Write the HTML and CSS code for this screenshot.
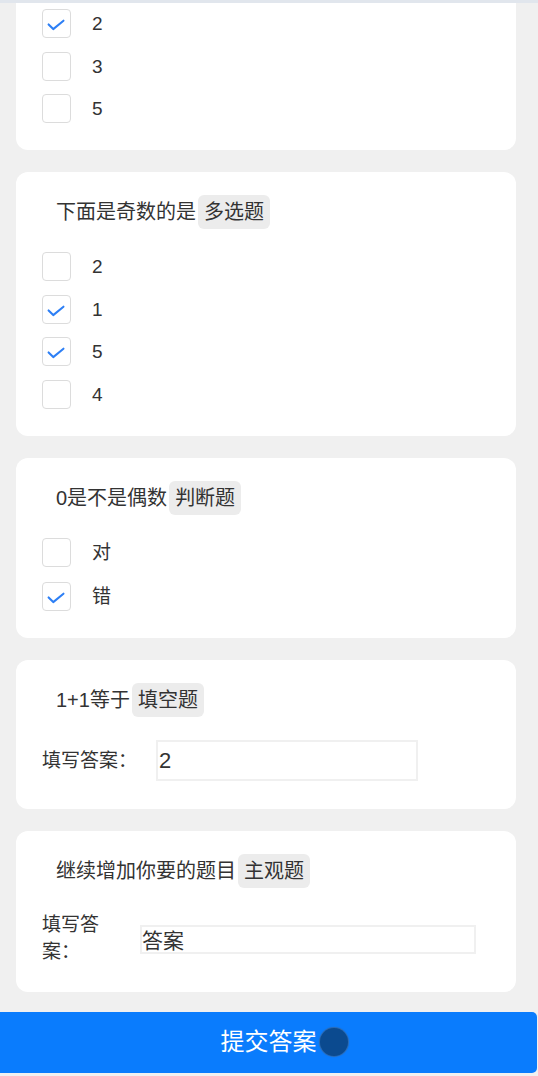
FILE: index.html
```html
<!DOCTYPE html>
<html lang="zh">
<head>
<meta charset="utf-8">
<title>答题</title>
<link rel="stylesheet" href="styles.css">
</head>
<body>
<div class="topbar"></div>
<main class="list">
  <section class="card card-first">
    <div class="options">
      <label class="option"><span class="box checked"><svg viewBox="0 0 29 29"><path d="M6 15.5 L11 20.5 L22 11.5"/></svg></span><span class="opt-text">2</span></label>
      <label class="option"><span class="box"></span><span class="opt-text">3</span></label>
      <label class="option"><span class="box"></span><span class="opt-text">5</span></label>
    </div>
  </section>

  <section class="card">
    <div class="title"><span class="q">下面是奇数的是</span><span class="tag">多选题</span></div>
    <div class="options">
      <label class="option"><span class="box"></span><span class="opt-text">2</span></label>
      <label class="option"><span class="box checked"><svg viewBox="0 0 29 29"><path d="M6 15.5 L11 20.5 L22 11.5"/></svg></span><span class="opt-text">1</span></label>
      <label class="option"><span class="box checked"><svg viewBox="0 0 29 29"><path d="M6 15.5 L11 20.5 L22 11.5"/></svg></span><span class="opt-text">5</span></label>
      <label class="option"><span class="box"></span><span class="opt-text">4</span></label>
    </div>
  </section>

  <section class="card">
    <div class="title"><span class="q">0是不是偶数</span><span class="tag">判断题</span></div>
    <div class="options options-wide">
      <label class="option"><span class="box"></span><span class="opt-text">对</span></label>
      <label class="option"><span class="box checked"><svg viewBox="0 0 29 29"><path d="M6 15.5 L11 20.5 L22 11.5"/></svg></span><span class="opt-text">错</span></label>
    </div>
  </section>

  <section class="card card-fill">
    <div class="title"><span class="q">1+1等于</span><span class="tag">填空题</span></div>
    <div class="field">
      <span class="field-label wide">填写答案：</span>
      <span class="input big">2</span>
    </div>
  </section>

  <section class="card card-last">
    <div class="title"><span class="q">继续增加你要的题目</span><span class="tag">主观题</span></div>
    <div class="field">
      <span class="field-label narrow">填写答案：</span>
      <span class="input small">答案</span>
    </div>
  </section>
</main>
<div class="submit"><span class="submit-text">提交答案<span class="dot"></span></span></div>
</body>
</html>
```
FILE: styles.css
```css
html, body {
  margin: 0;
  padding: 0;
}
body {
  background: #f0f0f0;
  font-family: "Liberation Sans", "Noto Sans CJK SC", sans-serif;
  color: #333;
  width: 538px;
  height: 1076px;
  overflow: hidden;
}
.topbar {
  height: 3px;
  background: #e1e6ed;
}
.list {
  padding: 0 22px 0 16px;
}
.card {
  background: #fff;
  border-radius: 12px;
  padding: 23px 26px 27px 26px;
  margin-bottom: 22px;
}
.card-first {
  border-radius: 0 0 12px 12px;
  padding-top: 6px;
}
.card-fill {
  padding-bottom: 28px;
}
.card-last {
  margin-bottom: 20px;
}
.title {
  display: flex;
  align-items: center;
  height: 34px;
  padding-left: 14px;
  font-size: 20px;
  margin-bottom: 23px;
}
.q {
  line-height: 34px;
}
.tag {
  margin-left: 2px;
  background: #ececec;
  border-radius: 6px;
  padding: 0 6px;
  height: 34px;
  line-height: 34px;
}
.options {
  display: flex;
  flex-direction: column;
  gap: 13.5px;
}
.options-wide {
  gap: 15px;
}
.option {
  display: flex;
  align-items: center;
  height: 29px;
}
.box {
  width: 27px;
  height: 27px;
  border: 1px solid #dcdcdc;
  border-radius: 4px;
  background: #fff;
  display: block;
}
.box svg {
  width: 27px;
  height: 27px;
  display: block;
}
.box svg path {
  fill: none;
  stroke: #2d7ff5;
  stroke-width: 2.2;
  stroke-linecap: round;
  stroke-linejoin: round;
}
.opt-text {
  margin-left: 21px;
  font-size: 19px;
  line-height: 29px;
}
.field {
  display: flex;
  align-items: center;
}
.field-label {
  font-size: 19px;
  line-height: 27px;
  flex: none;
}
.field-label.wide {
  width: 114px;
}
.field-label.narrow {
  width: 60px;
  margin-right: 38px;
}
.input {
  display: block;
  box-sizing: border-box;
  background: #fff;
  color: #333;
}
.input.big {
  width: 262px;
  height: 41px;
  border: 2px solid #f0f0f0;
  font-size: 22px;
  line-height: 37px;
  padding-left: 1px;
}
.input.small {
  width: 336px;
  height: 29px;
  border: 2px solid #f0f0f0;
  font-size: 21px;
  line-height: 27px;
  padding-left: 0;
  margin-top: 4px;
}
.submit {
  height: 61px;
  background: #0a7cfd;
  border-radius: 0 5px 5px 0;
  margin-right: 1px;
  display: flex;
  align-items: center;
  justify-content: center;
}
.submit-text {
  position: relative;
  color: #fff;
  font-size: 24px;
  line-height: 30px;
}
.dot {
  position: absolute;
  left: calc(100% + 3px);
  top: 50%;
  width: 28px;
  height: 28px;
  margin-top: -14px;
  border-radius: 50%;
  background: #0b4a8f;
  box-shadow: 0 0 1px 1px #2f68aa;
}
```
